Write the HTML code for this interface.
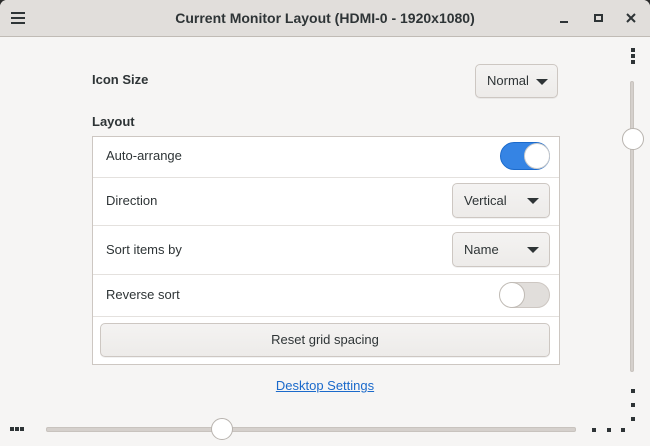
<!DOCTYPE html>
<html><head><style>
*{box-sizing:border-box;margin:0;padding:0}
body{width:650px;height:446px;overflow:hidden;background:#2b2b2b;font-family:"Liberation Sans","DejaVu Sans",sans-serif;font-size:13px;color:#2e3436}
.win{position:absolute;left:0;top:0;width:650px;height:446px;background:#f6f5f4;border-radius:7px 7px 0 0;overflow:hidden}
.tb{position:absolute;left:0;top:0;width:650px;height:37px;background:#e1dedb;border-bottom:1px solid #c0bbb5}
.t{position:absolute;left:0;width:650px;top:10px;text-align:center;font-weight:bold;font-size:14px;color:#2e3436}
.a{position:absolute}
.lbl{position:absolute;font-size:13px}
.box{position:absolute;left:92px;top:136px;width:468px;height:229px;background:#fff;border:1px solid #cdc7c2}
.sep{position:absolute;left:0;width:466px;height:1px;background:#e4e1de}
.btn{position:absolute;border:1px solid #cdc7c2;border-radius:5px;background:linear-gradient(#f4f3f2,#edebe9);box-shadow:0 1px 0 rgba(0,0,0,.05)}
.arr{position:absolute;width:0;height:0;border-left:6px solid transparent;border-right:6px solid transparent;border-top:6px solid #2e3436}
.sq{position:absolute;width:4px;height:4px;background:#2e3436}
</style></head><body>
<div class="win">
<div class="tb">
 <div class="a" style="left:11px;top:12px;width:14px;height:2px;background:#2e3436"></div>
 <div class="a" style="left:11px;top:17px;width:14px;height:2px;background:#2e3436"></div>
 <div class="a" style="left:11px;top:22px;width:14px;height:2px;background:#2e3436"></div>
 <div class="t">Current Monitor Layout (HDMI-0 - 1920x1080)</div>
 <div class="a" style="left:560px;top:21px;width:8px;height:2px;background:#2e3436"></div>
 <div class="a" style="left:594px;top:14px;width:9px;height:8px;border:2px solid #2e3436"></div>
 <svg class="a" style="left:626px;top:13px" width="10" height="10"><path d="M1 1L9 9M9 1L1 9" stroke="#2e3436" stroke-width="2"/></svg>
</div>
<div class="lbl" style="left:92px;top:72px;font-weight:bold">Icon Size</div>
<div class="btn" style="left:475px;top:64px;width:83px;height:34px"><span class="lbl" style="left:11px;top:8px">Normal</span><div class="arr" style="left:60px;top:14px"></div></div>
<div class="lbl" style="left:92px;top:114px;font-weight:bold">Layout</div>
<div class="box">
 <div class="lbl" style="left:13px;top:11px">Auto-arrange</div>
 <div class="sep" style="top:40px"></div>
 <div class="lbl" style="left:13px;top:56px">Direction</div>
 <div class="sep" style="top:88px"></div>
 <div class="lbl" style="left:13px;top:105px">Sort items by</div>
 <div class="sep" style="top:137px"></div>
 <div class="lbl" style="left:13px;top:150px">Reverse sort</div>
 <div class="sep" style="top:179px"></div>
 <div class="a" style="left:407px;top:5px;width:50px;height:28px;border-radius:14px;background:#3584e4;border:1px solid #1b6acb"></div>
 <div class="a" style="left:431px;top:6px;width:26px;height:26px;border-radius:13px;background:#fff;border:1px solid #ccc"></div>
 <div class="btn" style="left:359px;top:46px;width:98px;height:35px"><span class="lbl" style="left:11px;top:9px">Vertical</span><div class="arr" style="left:74px;top:14px"></div></div>
 <div class="btn" style="left:359px;top:95px;width:98px;height:35px"><span class="lbl" style="left:11px;top:9px">Name</span><div class="arr" style="left:74px;top:14px"></div></div>
 <div class="a" style="left:407px;top:145px;width:50px;height:26px;border-radius:13px;background:#e1dedb;border:1px solid #cdc7c2"></div>
 <div class="a" style="left:406px;top:145px;width:26px;height:26px;border-radius:13px;background:#fff;border:1px solid #c0bbb5"></div>
 <div class="btn" style="left:7px;top:186px;width:450px;height:34px"><span class="lbl" style="left:0;width:448px;text-align:center;top:8px">Reset grid spacing</span></div>
</div>
<div class="lbl" style="left:0;width:650px;text-align:center;top:378px;color:#1b6acb;text-decoration:underline">Desktop Settings</div>
<div class="sq" style="left:631px;top:48px"></div><div class="sq" style="left:631px;top:54px"></div><div class="sq" style="left:631px;top:60px"></div>
<div class="a" style="left:630px;top:81px;width:4px;height:291px;border-radius:2px;background:#d5d0cc;border:1px solid #c8c3be"></div>
<div class="a" style="left:622px;top:128px;width:22px;height:22px;border-radius:11px;background:#fff;border:1px solid #b8b3ae"></div>
<div class="sq" style="left:631px;top:389px"></div><div class="sq" style="left:631px;top:403px"></div><div class="sq" style="left:631px;top:417px"></div>
<div class="sq" style="left:10px;top:427px"></div><div class="sq" style="left:15px;top:427px"></div><div class="sq" style="left:20px;top:427px"></div>
<div class="a" style="left:46px;top:427px;width:530px;height:5px;border-radius:2px;background:#d5d0cc;border:1px solid #c8c3be"></div>
<div class="a" style="left:211px;top:418px;width:22px;height:22px;border-radius:11px;background:#fff;border:1px solid #b8b3ae"></div>
<div class="sq" style="left:592px;top:428px"></div><div class="sq" style="left:607px;top:428px"></div><div class="sq" style="left:621px;top:428px"></div>
</div>
</body></html>
